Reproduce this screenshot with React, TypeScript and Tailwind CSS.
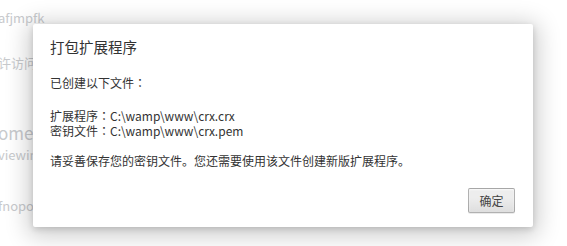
export default function App() {
  const font = { fontFamily: '"Noto Sans CJK SC", "Noto Sans", sans-serif' };
  const colon = <span style={{ fontFamily: '"Noto Sans CJK TC", sans-serif' }}>：</span>;
  return (
    <div className="relative w-[567px] h-[246px] overflow-hidden bg-white" style={font}>
      {/* Faded page behind the dialog */}
      <div className="flex flex-col text-[#c8cacd] text-[13px] leading-[16px] ml-[-2px]">
        <div className="mt-[10px]">afjmpfk</div>
        <div className="mt-[29px]">许访问文件网址</div>
        <div className="mt-[52px] text-[17px] leading-[20px]">ome</div>
        <div className="mt-[4px]">viewing</div>
        <div className="mt-[35px]">fnopoo</div>
      </div>

      {/* Dialog */}
      <div className="absolute left-[33px] top-[24px] w-[500px] h-[203px] bg-white rounded-[2px] shadow-[0_4px_23px_5px_rgba(0,0,0,0.2),0_2px_6px_rgba(0,0,0,0.15)] flex flex-col pl-[17px] pr-[18px] pt-[13px] pb-[14px] text-[#333]">
        <div className="text-[14.5px] leading-[20px] text-[#333]">打包扩展程序</div>
        <div className="mt-[18px] text-[12px] leading-[15px]">已创建以下文件{colon}</div>
        <div className="mt-[18px] text-[12px] leading-[15px]">
          <div>扩展程序{colon}C:\wamp\www\crx.crx</div>
          <div>密钥文件{colon}C:\wamp\www\crx.pem</div>
        </div>
        <div className="mt-[15px] text-[12px] leading-[15px]">
          请妥善保存您的密钥文件。您还需要使用该文件创建新版扩展程序。
        </div>
        <div className="mt-auto flex justify-end">
          <button className="w-[47px] h-[25px] text-[12px] text-[#444] rounded-[2px] border border-[rgba(0,0,0,0.25)] bg-[linear-gradient(#ededed,#ededed_38%,#dedede)] shadow-[0_1px_0_rgba(0,0,0,0.08),inset_0_1px_2px_rgba(255,255,255,0.75)]">
            确定
          </button>
        </div>
      </div>
    </div>
  );
}
